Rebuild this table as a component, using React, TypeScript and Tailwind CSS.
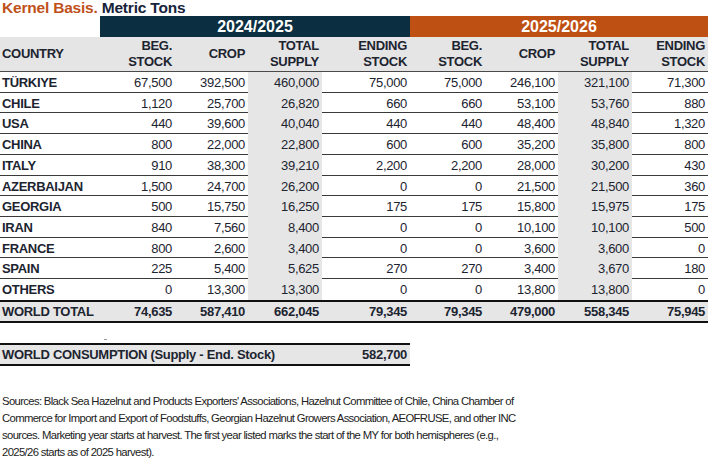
import React from "react";

const rows: [string, string, string, string, string, string, string, string, string][] = [
  ["TÜRKIYE", "67,500", "392,500", "460,000", "75,000", "75,000", "246,100", "321,100", "71,300"],
  ["CHILE", "1,120", "25,700", "26,820", "660", "660", "53,100", "53,760", "880"],
  ["USA", "440", "39,600", "40,040", "440", "440", "48,400", "48,840", "1,320"],
  ["CHINA", "800", "22,000", "22,800", "600", "600", "35,200", "35,800", "800"],
  ["ITALY", "910", "38,300", "39,210", "2,200", "2,200", "28,000", "30,200", "430"],
  ["AZERBAIJAN", "1,500", "24,700", "26,200", "0", "0", "21,500", "21,500", "360"],
  ["GEORGIA", "500", "15,750", "16,250", "175", "175", "15,800", "15,975", "175"],
  ["IRAN", "840", "7,560", "8,400", "0", "0", "10,100", "10,100", "500"],
  ["FRANCE", "800", "2,600", "3,400", "0", "0", "3,600", "3,600", "0"],
  ["SPAIN", "225", "5,400", "5,625", "270", "270", "3,400", "3,670", "180"],
  ["OTHERS", "0", "13,300", "13,300", "0", "0", "13,800", "13,800", "0"],
];

const total = ["WORLD TOTAL", "74,635", "587,410", "662,045", "79,345", "79,345", "479,000", "558,345", "75,945"];

const cols = "grid grid-cols-[100px_75px_73px_74px_88px_75px_73px_74px_76px]";

function HeadCell({ top, bottom }: { top?: string; bottom: string }) {
  return (
    <div className="flex flex-col justify-center items-end pr-[3px] leading-[16px]">
      {top && <span>{top}</span>}
      <span>{bottom}</span>
    </div>
  );
}

export default function App() {
  return (
    <div className="w-[708px] h-[459px] bg-white text-[#1c2430] font-['Liberation_Sans',Arial,sans-serif] overflow-hidden">
      <div className="h-[16px] px-[2px] text-[15.5px] leading-[16px] font-bold tracking-[-0.2px]">
        <span className="text-[#c0501a]">Kernel Basis.</span> <span className="text-[#16233a]">Metric Tons</span>
      </div>

      <div className="grid grid-cols-[100px_310px_298px] h-[21px] text-white font-bold text-[16px] leading-[21px]">
        <div />
        <div className="bg-[#0b2f40] text-center">2024/2025</div>
        <div className="bg-[#bf5014] text-center">2025/2026</div>
      </div>

      <div className={`${cols} h-[35px] bg-[#e5e5e5] border-b border-[#4a4a4a] text-[13px] font-bold tracking-[-0.3px]`}>
        <div className="flex items-center pl-[2px]">COUNTRY</div>
        <HeadCell top="BEG." bottom="STOCK" />
        <HeadCell bottom="CROP" />
        <HeadCell top="TOTAL" bottom="SUPPLY" />
        <HeadCell top="ENDING" bottom="STOCK" />
        <HeadCell top="BEG." bottom="STOCK" />
        <HeadCell bottom="CROP" />
        <HeadCell top="TOTAL" bottom="SUPPLY" />
        <HeadCell top="ENDING" bottom="STOCK" />
      </div>

      {rows.map((r, i) => (
        <div
          key={r[0]}
          className={`${cols} h-[20.73px] text-[13px] tracking-[-0.3px] leading-[21px] ${i < rows.length - 1 ? "border-b border-[#3a3a3a]" : ""}`}
        >
          <div className="pl-[2px] font-bold">{r[0]}</div>
          {r.slice(1).map((v, j) => (
            <div key={j} className={`text-right pr-[3px] ${j === 2 || j === 6 ? "bg-[#e6e6e6]" : ""}`}>
              {v}
            </div>
          ))}
        </div>
      ))}

      <div className={`${cols} h-[23px] bg-[#e6e6e6] border-y-2 border-[#111] text-[13px] tracking-[-0.3px] leading-[19px] font-bold`}>
        <div className="pl-[2px]">{total[0]}</div>
        {total.slice(1).map((v, j) => (
          <div key={j} className="text-right pr-[3px]">
            {v}
          </div>
        ))}
      </div>

      <div className="h-[20px] pl-[104px] pt-[16px]">
        <span className="block w-[3px] h-[1px] bg-[#9a9a9a]" />
      </div>

      <div className="w-[410px] h-[23px] bg-[#e6e6e6] border-y-2 border-[#111] flex justify-between items-center px-[2px] pr-[3px] text-[13px] tracking-[-0.3px] font-bold">
        <span>WORLD CONSUMPTION (Supply - End. Stock)</span>
        <span>582,700</span>
      </div>

      <div className="mt-[27px] px-[2px] text-[11.3px] leading-[17px] tracking-[-0.65px] text-[#222] whitespace-nowrap">
        Sources: Black Sea Hazelnut and Products Exporters' Associations, Hazelnut Committee of Chile, China Chamber of
        <br />
        Commerce for Import and Export of Foodstuffs, Georgian Hazelnut Growers Association, AEOFRUSE, and other INC
        <br />
        sources. Marketing year starts at harvest. The first year listed marks the start of the MY for both hemispheres (e.g.,
        <br />
        2025/26 starts as of 2025 harvest).
      </div>
    </div>
  );
}
